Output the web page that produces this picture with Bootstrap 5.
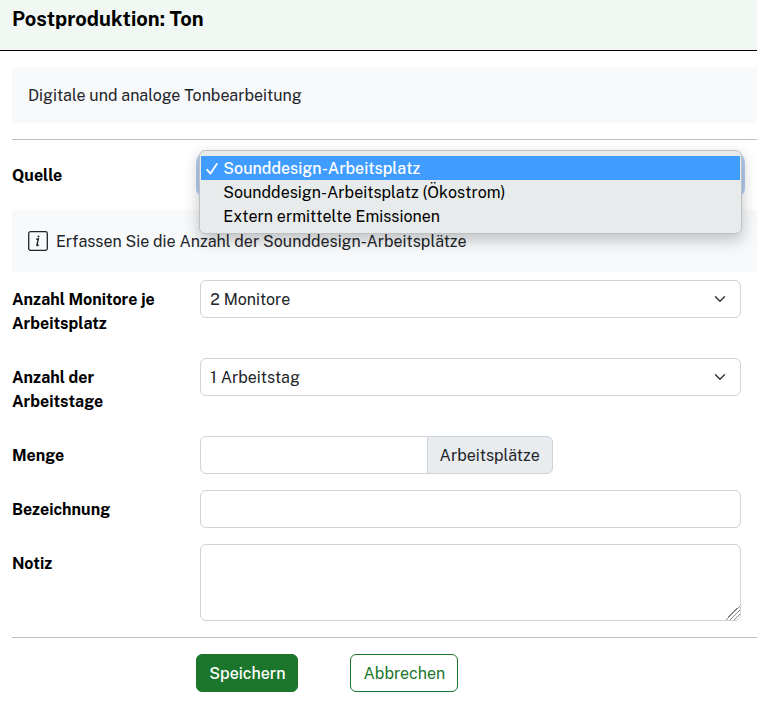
<!DOCTYPE html>
<html lang="de">
<head>
<meta charset="utf-8">
<meta name="viewport" content="width=device-width, initial-scale=1">
<title>Postproduktion: Ton</title>
<link href="https://cdn.jsdelivr.net/npm/bootstrap@5.3.0/dist/css/bootstrap.min.css" rel="stylesheet">
<style>
  body { font-family: "Public Sans", Inter, "Liberation Sans", sans-serif; color: #212529; }
  .page-head { background: #f1f7f3; border-bottom: 1px solid #000; padding: 4px 12px 16px; }
  .page-head h1 { font-size: 20px; line-height: 30px; color: #000; }
  .page-body { padding: 16px 0 0 12px; }
  .panel { background: #f8f9fb; }
  .panel-text { padding: 17px 16px 15px; }
  .info-line { padding: 17px 16px 18px; }
  .info-line p { padding-top: 3px; }
  .rule { border-top-color: #000; opacity: .25; }
  .entry-form { padding-right: 16px; }
  .wide { margin-right: -16px; }
  .col-form-label { color: #000; font-weight: 700; padding-top: 8px; padding-bottom: 6px; }
  .form-select, .form-control { border-color: #ced4da; }
  .form-select { padding: 7px 36px 5px 9px; }
  .input-group-text { background: #e9ecef; border-color: #ced4da; padding-top: 7px; padding-bottom: 5px; }
  .source-select { border-color: #a9c4f0; box-shadow: 0 0 0 4px #b3cdf5; }
  .source-menu { top: -6px; left: -1px; right: -1px; z-index: 10; padding: 5px 1px; background: #e7ebeb;
    border: 1px solid #bfc2c2; border-radius: 6px; box-shadow: 0 6px 16px rgba(0, 0, 0, .24); }
  .source-menu button { height: 24px; line-height: 22px; padding: 2px 0 0 22px; border: 0; background: transparent; color: #000; font-kerning: none; }
  .source-menu button[aria-selected="true"] { background: #419cff; color: #fff; padding-left: 5px; font-weight: 500; }
  .source-menu svg { width: 12px; height: 14px; margin-right: 5px; }
  .note-field { height: 77px; }
  .note-field::-webkit-resizer { background: linear-gradient(135deg, transparent 50%, #888 50% 55%, transparent 55% 64%, #888 64% 69%, transparent 69% 78%, #888 78% 83%, transparent 83%); }
  .form-actions { gap: 52px; padding-left: 2px; }
  .btn { padding: 7px 12px 5px; }
  .btn-save { font-weight: 500; --bs-btn-color: #fff; --bs-btn-bg: #1b762c; --bs-btn-border-color: #1b762c; --bs-btn-hover-color: #fff; --bs-btn-hover-bg: #155e23; }
  .btn-cancel { --bs-btn-color: #1b762c; --bs-btn-bg: #fff; --bs-btn-border-color: #1b762c; --bs-btn-hover-color: #fff; --bs-btn-hover-bg: #1b762c; }
</style>
<script src="https://cdn.jsdelivr.net/npm/bootstrap@5.3.0/dist/js/bootstrap.bundle.min.js"></script>
</head>
<body>
<header class="page-head">
  <h1 class="fw-bold mb-0">Postproduktion: Ton</h1>
</header>
<main class="page-body">
  <div class="panel panel-text">Digitale und analoge Tonbearbeitung</div>
  <hr class="rule">
  <form class="entry-form">
    <div class="row mb-3">
      <label class="col-3 col-form-label" for="quelle">Quelle</label>
      <div class="col-9">
        <div class="position-relative">
          <select class="form-select source-select" id="quelle">
            <option selected>Sounddesign-Arbeitsplatz</option>
            <option>Sounddesign-Arbeitsplatz (Ökostrom)</option>
            <option>Extern ermittelte Emissionen</option>
          </select>
          <div class="source-menu position-absolute d-flex flex-column" role="listbox" aria-label="Quelle">
            <button type="button" class="d-flex align-items-center text-start" role="option" aria-selected="true"><svg viewBox="0 0 12 14" fill="none" stroke="#fff" stroke-width="1.8" stroke-linecap="round" stroke-linejoin="round" aria-hidden="true"><path d="M1.2 7.8 4.5 11.6 10.8 2"/></svg>Sounddesign-Arbeitsplatz</button>
            <button type="button" class="text-start" role="option" aria-selected="false">Sounddesign-Arbeitsplatz (Ökostrom)</button>
            <button type="button" class="text-start" role="option" aria-selected="false">Extern ermittelte Emissionen</button>
          </div>
        </div>
      </div>
    </div>
    <div class="panel wide d-flex align-items-center gap-2 mb-2 info-line">
      <svg width="20" height="20" viewBox="0 0 20 20" fill="none" stroke="#212529" aria-hidden="true"><rect x=".7" y=".7" width="18.6" height="18.6" rx="1.8" stroke-width="1.3"/><path d="M8.3 8.3 10.3 7.9 8.9 14q-.1.8.5.6l1.3-.6" stroke-width="1.4"/><circle cx="10.5" cy="5.4" r="1" fill="#212529" stroke="none"/></svg>
      <p class="mb-0">Erfassen Sie die Anzahl der Sounddesign-Arbeitsplätze</p>
    </div>
    <div class="row mb-3">
      <label class="col-3 col-form-label" for="monitore">Anzahl Monitore je Arbeitsplatz</label>
      <div class="col-9"><select class="form-select" id="monitore"><option>2 Monitore</option></select></div>
    </div>
    <div class="row mb-3">
      <label class="col-3 col-form-label" for="tage">Anzahl der Arbeitstage</label>
      <div class="col-9"><select class="form-select" id="tage"><option>1 Arbeitstag</option></select></div>
    </div>
    <div class="row mb-3">
      <label class="col-3 col-form-label" for="menge">Menge</label>
      <div class="col-9">
        <div class="row">
          <div class="col-8">
            <div class="input-group">
              <input type="text" class="form-control" id="menge">
              <span class="input-group-text">Arbeitsplätze</span>
            </div>
          </div>
        </div>
      </div>
    </div>
    <div class="row mb-3">
      <label class="col-3 col-form-label" for="bezeichnung">Bezeichnung</label>
      <div class="col-9"><input type="text" class="form-control" id="bezeichnung"></div>
    </div>
    <div class="row mb-3">
      <label class="col-3 col-form-label" for="notiz">Notiz</label>
      <div class="col-9"><textarea class="form-control note-field" id="notiz"></textarea></div>
    </div>
    <hr class="rule wide">
    <div class="row g-0">
      <div class="offset-3 col-9 d-flex form-actions">
        <button type="submit" class="btn btn-save">Speichern</button>
        <button type="button" class="btn btn-cancel">Abbrechen</button>
      </div>
    </div>
  </form>
</main>
</body>
</html>
